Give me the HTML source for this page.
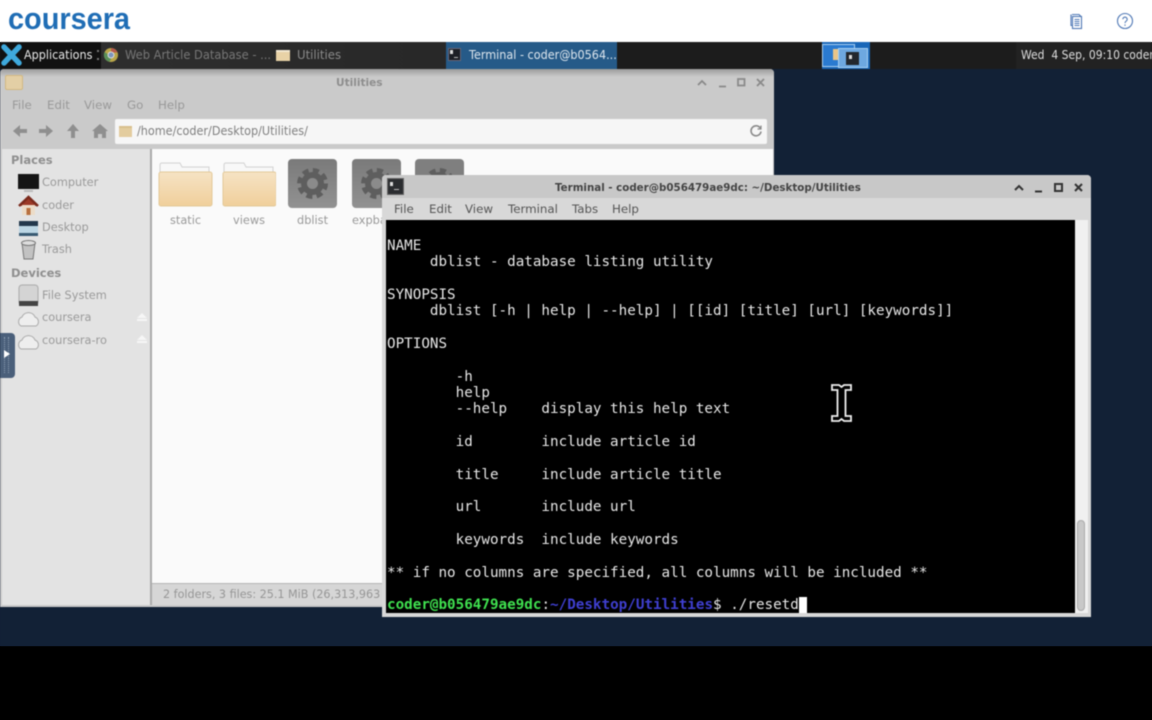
<!DOCTYPE html>
<html><head><meta charset="utf-8">
<style>
html,body{margin:0;padding:0;width:1152px;height:720px;overflow:hidden;background:#000}
*{box-sizing:border-box}
.a{position:absolute}
.t{position:absolute;white-space:pre;font-family:"DejaVu Sans","Liberation Sans",sans-serif;line-height:16px;transform-origin:left center}
#v{position:absolute;left:0;top:0;width:1152px;height:720px;filter:blur(.45px);overflow:hidden}
.mono{position:absolute;white-space:pre;font-family:"DejaVu Sans Mono","Liberation Mono",monospace;font-size:14.25px;line-height:16px;color:#e6e6e6;left:387px}
.p{font-size:11.800px;color:#9a9a9a;left:42px;transform:scaleX(.96)}
.m{font-size:11.800px}
</style></head><body>
<div class="a" style="left:0;top:0;width:1152px;height:42px;background:#fff"></div>
<div class="a" style="left:0;top:42px;width:1152px;height:27px;background:#1c1c1c"></div>
<div class="a" style="left:0;top:69px;width:1152px;height:577px;background:#122136"></div>
<div id="v">
<div class="a" style="left:0;top:0;width:1152px;height:42px;background:#fff"></div>
<svg class="a" style="left:0;top:0" width="140" height="42"><text x="8" y="29" font-family="'Liberation Sans',sans-serif" font-weight="700" font-size="31" fill="#1f6db5" textLength="122" lengthAdjust="spacingAndGlyphs">coursera</text></svg>
<svg class="a" style="left:1068px;top:12px" width="18" height="18" fill="none" stroke="#4f78b5" stroke-width="1.1"><path d="M4 2.500h7l1.500 1.500v.5M3 2.500v11h1.500"/><rect x="4.500" y="4.500" width="9" height="12" fill="#fff"/><path d="M6.500 7.500h5M6.500 9.500h5M6.500 11.500h5M6.500 13.500h5"/></svg>
<svg class="a" style="left:1116px;top:12px" width="18" height="18" fill="none" stroke="#4f78b5" stroke-width="1.1"><circle cx="9" cy="9" r="7.500"/><path d="M6.800 7.200a2.200 2.200 0 1 1 3.400 1.900c-.8.500-1.200 1-1.200 2"/><path d="M9 12.500v1.300"/></svg>

<div class="a" style="left:0;top:42px;width:1152px;height:27px;background:#1c1c1c"></div>
<div class="a" style="left:0;top:42px;width:101px;height:27px;background:#111"></div>
<div class="a" style="left:101px;top:42px;width:345px;height:27px;background:linear-gradient(90deg,#2e2e2e,#282828)"></div>
<div class="a" style="left:446px;top:42px;width:171px;height:27px;background:#265a88"></div>
<div class="a" style="left:1016px;top:42px;width:136px;height:27px;background:#222"></div>
<svg class="a" style="left:1px;top:44px" width="21" height="22"><path d="M3 3l15 16M18 3L3 19" stroke="#3fa9dc" stroke-width="5.500" stroke-linecap="round"/></svg>
<div class="t" style="left:24px;top:47px;font-size:12.200px;color:#e8e8e8;transform:scaleX(.92)">Applications</div>
<div class="a" style="left:97px;top:50px;width:2px;height:10px;border-top:2px dotted #777;border-bottom:2px dotted #777"></div>
<svg class="a" style="left:103px;top:47px" width="16" height="16"><circle cx="8" cy="8" r="7" fill="#b9a64a"/><path d="M8 1a7 7 0 0 1 6.500 4.500H8z" fill="#b85a4c"/><path d="M1.500 5a7 7 0 0 0 5 9.800L9 10z" fill="#5a8f58"/><circle cx="8" cy="8" r="3" fill="#7c95bd" stroke="#ddd"/></svg>
<div class="t" style="left:125px;top:47px;font-size:12.200px;color:#777;transform:scaleX(.94)">Web Article Database - ...</div>
<div class="a" style="left:276px;top:50px;width:14px;height:11px;background:#e8d2a6;border-top:2px solid #f2e8d2"></div>
<div class="t" style="left:297px;top:47px;font-size:12.200px;color:#8a8a8a;transform:scaleX(.96)">Utilities</div>
<div class="a" style="left:448px;top:48px;width:13px;height:13px;background:#1d1f26;border:1px solid #667"></div>
<div class="a" style="left:450px;top:50px;width:3px;height:4px;background:#ddd"></div>
<div class="a" style="left:454px;top:57px;width:4px;height:1px;background:#bbb"></div>
<div class="t" style="left:469px;top:47px;font-size:12.200px;color:#dde6ee;transform:scaleX(.92)">Terminal - coder@b0564...</div>

<div class="a" style="left:822px;top:42px;width:48px;height:27px;background:#1a67b8"></div>
<div class="a" style="left:822px;top:44px;width:33px;height:23px;background:#2a7ad0;border:1px solid #a9d0f2"></div>
<div class="a" style="left:833px;top:49px;width:7px;height:11px;background:#e9c588"></div>
<div class="a" style="left:838px;top:48px;width:30px;height:20px;background:#6ea8e0;border:1px solid #a9d0f2"></div>
<div class="a" style="left:846px;top:52px;width:13px;height:13px;background:#23272d"></div>
<div class="a" style="left:849px;top:55px;width:3px;height:4px;background:#ddd"></div>
<div class="t" style="left:1021px;top:47px;font-size:12.200px;color:#dedede;transform:scaleX(.885)">Wed  4 Sep, 09:10 coder</div>

<div class="a" style="left:0;top:69px;width:1152px;height:577px;background:#122136"></div>

<!-- Thunar -->
<div class="a" style="left:0;top:69px;width:774px;height:538px;background:#cacaca;border-radius:4px 4px 0 0"></div>
<div class="a" style="left:0;top:69px;width:774px;height:8px;background:linear-gradient(#9c9c9c,#cacaca);border-radius:4px 4px 0 0"></div>
<div class="a" style="left:5px;top:75px;width:18px;height:15px;background:#e3cfa5;border:1px solid #d3b981;border-radius:2px"></div>
<div class="t" style="left:336px;top:75px;font-size:11px;font-weight:700;color:#8e8e8e;transform:scaleX(.96)">Utilities</div>
<svg class="a" style="left:695px;top:75px" width="75" height="15" fill="none" stroke="#8a8a8a" stroke-width="1.800"><path d="M3 10l4-4 4 4"/><path d="M24 11.500h7"/><rect x="43" y="4" width="6.500" height="6.500"/><path d="M62 4l7 7M69 4l-7 7"/></svg>
<div class="t m" style="left:12px;top:96.500px;color:#999">File</div>
<div class="t m" style="left:47px;top:96.500px;color:#999">Edit</div>
<div class="t m" style="left:84px;top:96.500px;color:#999">View</div>
<div class="t m" style="left:127px;top:96.500px;color:#999">Go</div>
<div class="t m" style="left:158px;top:96.500px;color:#999">Help</div>
<svg class="a" style="left:12px;top:123px" width="100" height="16" fill="#8f8f8f"><path d="M1 8l7-6v4h7v4H8v4z"/><path d="M42 8l-7-6v4h-7v4h7v4z" transform="translate(-1 0)"/><path d="M61 1l6 7h-4v7h-4V8h-4z"/><path d="M88 1l8 7h-2v7h-4v-4h-4v4h-4V8h-2z"/></svg>
<div class="a" style="left:115px;top:119px;width:652px;height:25px;background:#f6f6f6;border-radius:2px"></div>
<div class="a" style="left:119px;top:126px;width:13px;height:11px;background:#e3cc9e;border-top:2px solid #d8bf8c"></div>
<div class="t" style="left:137px;top:123px;font-size:12px;color:#808080;transform:scaleX(.935)">/home/coder/Desktop/Utilities/</div>
<svg class="a" style="left:749px;top:124px" width="14" height="14" fill="none" stroke="#8a8a8a" stroke-width="1.600"><path d="M11.500 4.500a5 5 0 1 0 .5 3"/><path d="M12 1.500v3.500H8.500" stroke-width="1.200"/></svg>

<div class="a" style="left:2px;top:149px;width:148px;height:456px;background:#e3e3e3"></div>
<div class="a" style="left:150px;top:149px;width:2px;height:456px;background:#aaa"></div>
<div class="a" style="left:152px;top:149px;width:621px;height:434px;background:#fafafa"></div>
<div class="a" style="left:152px;top:583px;width:621px;height:22px;background:#d6d6d6;border-top:1px solid #b5b5b5"></div>
<div class="t" style="left:163px;top:586px;font-size:11.500px;color:#969696;transform:scaleX(.97)">2 folders, 3 files: 25.1 MiB (26,313,963</div>

<div class="t" style="left:11px;top:152px;font-size:11.500px;font-weight:700;color:#8f8f8f">Places</div>
<div class="t p" style="top:174px">Computer</div>
<div class="t p" style="top:197px">coder</div>
<div class="t p" style="top:219px">Desktop</div>
<div class="t p" style="top:241px">Trash</div>
<div class="t" style="left:11px;top:265px;font-size:11.500px;font-weight:700;color:#8f8f8f">Devices</div>
<div class="t p" style="top:287px">File System</div>
<div class="t p" style="top:309px">coursera</div>
<div class="t p" style="top:332px">coursera-ro</div>

<svg class="a" style="left:16px;top:172px" width="26" height="180">
<rect x="2" y="2" width="21" height="15" fill="#151515"/><path d="M8 19h9" stroke="#bbb" stroke-width="2"/>
<path d="M3 34L12.500 25l9.500 9" fill="#9c3a28" stroke="#7a2a1c" stroke-width="2.500"/><rect x="6" y="33" width="13" height="10" fill="#ecdcc8"/><rect x="10.500" y="36" width="4" height="7" fill="#b8703e"/>
<rect x="3" y="49" width="19" height="15" fill="#bcd6e4"/><rect x="3" y="49" width="19" height="5" fill="#23384c"/><rect x="3" y="61" width="19" height="3" fill="#385a72"/>
<path d="M6 71h13l-2 16H8z" fill="#c2c2c2" stroke="#777"/><ellipse cx="12.500" cy="71" rx="7" ry="2.500" fill="#ddd" stroke="#777"/>
<rect x="3" y="113" width="19" height="20" rx="3" fill="#d4d4d4" stroke="#aaa"/><rect x="3" y="129" width="19" height="5" fill="#444"/>
<path d="M5 154a5 5 0 0 1 1-9 7 7 0 0 1 13 0 5 5 0 0 1 1 9z" fill="#eee" stroke="#aaa"/>
<path d="M5 177a5 5 0 0 1 1-9 7 7 0 0 1 13 0 5 5 0 0 1 1 9z" fill="#eee" stroke="#aaa"/>
</svg>
<svg class="a" style="left:136px;top:312px" width="12" height="36" fill="#f6f6f6"><path d="M6 1l5 5H1z"/><rect x="1" y="7" width="10" height="2"/><path d="M6 23l5 5H1z"/><rect x="1" y="29" width="10" height="2"/></svg>

<div class="a" style="left:0;top:333px;width:15px;height:45px;background:#4a5f7a;border-radius:0 4px 4px 0"></div>
<div class="a" style="left:4px;top:337px;width:5px;height:36px;border-left:1px dotted #8fa0b5;border-right:1px dotted #8fa0b5"></div>
<svg class="a" style="left:3px;top:350px" width="8" height="8"><path d="M1 0l6 4-6 4z" fill="#fff"/></svg>

<svg class="a" style="left:158px;top:160px" width="118" height="48">
<defs><linearGradient id="f" x1="0" y1="0" x2="0" y2="1"><stop offset="0" stop-color="#f6e3c4"/><stop offset="1" stop-color="#f0cf9b"/></linearGradient></defs>
<path d="M2 12V5q0-2 2-2h18l2 4h27v5z" fill="#f8f8f8" stroke="#d2d2d2"/><rect x="1" y="12" width="53" height="34" rx="2" fill="url(#f)" stroke="#e3c999"/>
<g transform="translate(64 0)"><path d="M2 12V5q0-2 2-2h18l2 4h27v5z" fill="#f8f8f8" stroke="#d2d2d2"/><rect x="1" y="12" width="53" height="34" rx="2" fill="url(#f)" stroke="#e3c999"/></g>
</svg>
<div class="a" style="left:288px;top:159px;width:49px;height:49px;border-radius:4px;background:linear-gradient(#7a7a7a,#929292)"></div>
<div class="a" style="left:352px;top:159px;width:49px;height:49px;border-radius:4px;background:linear-gradient(#7a7a7a,#929292)"></div>
<div class="a" style="left:415px;top:159px;width:49px;height:20px;border-radius:4px 4px 0 0;background:#7f7f7f"></div>
<svg class="a" style="left:296px;top:167px" width="33" height="33"><circle cx="16.500" cy="16.500" r="13" fill="none" stroke="#5e5e5e" stroke-width="5" stroke-dasharray="6 4.200"/><circle cx="16.500" cy="16.500" r="11.500" fill="#5e5e5e"/><circle cx="16.500" cy="16.500" r="5.500" fill="#8b8b8b"/></svg>
<svg class="a" style="left:360px;top:167px" width="33" height="33"><circle cx="16.500" cy="16.500" r="13" fill="none" stroke="#5e5e5e" stroke-width="5" stroke-dasharray="6 4.200"/><circle cx="16.500" cy="16.500" r="11.500" fill="#5e5e5e"/><circle cx="16.500" cy="16.500" r="5.500" fill="#8b8b8b"/></svg>
<svg class="a" style="left:423px;top:167px" width="33" height="12"><circle cx="16.500" cy="16.500" r="13" fill="none" stroke="#5e5e5e" stroke-width="5" stroke-dasharray="6 4.200"/><circle cx="16.500" cy="16.500" r="11.500" fill="#5e5e5e"/></svg>
<div class="t p" style="left:170px;top:212px;color:#999">static</div>
<div class="t p" style="left:233px;top:212px;color:#999">views</div>
<div class="t p" style="left:297px;top:212px;color:#999">dblist</div>
<div class="t p" style="left:352px;top:212px;color:#999">expba</div>

<!-- Terminal -->
<div class="a" style="left:382px;top:175px;width:709px;height:442px;background:#d8d8d8;border-radius:4px 4px 0 0"></div>
<div class="a" style="left:382px;top:175px;width:709px;height:23px;background:#c8c8c8;border-radius:4px 4px 0 0"></div>
<div class="a" style="left:387px;top:178px;width:17px;height:17px;background:#2b2d30;border:1px solid #666"></div>
<div class="a" style="left:390px;top:182px;width:3px;height:4px;background:#ddd"></div>
<div class="a" style="left:394px;top:189px;width:5px;height:1px;background:#bbb"></div>
<div class="t" style="left:555px;top:180px;font-size:11px;font-weight:700;color:#444;transform:scaleX(.935)">Terminal - coder@b056479ae9dc: ~/Desktop/Utilities</div>
<svg class="a" style="left:1012px;top:180px" width="75" height="15" fill="none" stroke="#333" stroke-width="2"><path d="M3 10l4-4 4 4"/><path d="M23 11.500h7"/><rect x="43" y="4" width="7" height="7"/><path d="M63 4l7 7M70 4l-7 7"/></svg>
<div class="t m" style="left:394px;top:201px;color:#555">File</div>
<div class="t m" style="left:429px;top:201px;color:#555">Edit</div>
<div class="t m" style="left:465px;top:201px;color:#555">View</div>
<div class="t m" style="left:508px;top:201px;color:#555">Terminal</div>
<div class="t m" style="left:572px;top:201px;color:#555">Tabs</div>
<div class="t m" style="left:612px;top:201px;color:#555">Help</div>
<div class="a" style="left:386px;top:220px;width:689px;height:393px;background:#000"></div>
<div class="a" style="left:1075px;top:220px;width:13px;height:393px;background:#f0f0f0"></div>
<div class="a" style="left:1077px;top:520px;width:8px;height:91px;background:#c8c8c8;border:1px solid #aaa;border-radius:4px"></div>

<div class="mono" style="top:238px">NAME</div>
<div class="mono" style="top:254px">     dblist - database listing utility</div>
<div class="mono" style="top:287px">SYNOPSIS</div>
<div class="mono" style="top:303px">     dblist [-h | help | --help] | [[id] [title] [url] [keywords]]</div>
<div class="mono" style="top:336px">OPTIONS</div>
<div class="mono" style="top:369px">        -h</div>
<div class="mono" style="top:385px">        help</div>
<div class="mono" style="top:401px">        --help    display this help text</div>
<div class="mono" style="top:434px">        id        include article id</div>
<div class="mono" style="top:467px">        title     include article title</div>
<div class="mono" style="top:499px">        url       include url</div>
<div class="mono" style="top:532px">        keywords  include keywords</div>
<div class="mono" style="top:565px">** if no columns are specified, all columns will be included **</div>
<div class="mono" style="top:597px"><b style="color:#3fe04f">coder@b056479ae9dc</b><span>:</span><b style="color:#3f3fd0">~/Desktop/Utilities</b><span>$ ./resetd</span></div>
<div class="a" style="left:799px;top:597px;width:8px;height:16px;background:#fff"></div>

<svg class="a" style="left:830px;top:383px" width="24" height="40" fill="none">
<path d="M2 2h7l2.500 2 2.500-2h7v5h-5.500v26H21v5h-7l-2.500-2-2.500 2H2v-5h5.500V7H2z" fill="#000" stroke="#eee" stroke-width="1.800"/>
</svg>
</div>
</body></html>
